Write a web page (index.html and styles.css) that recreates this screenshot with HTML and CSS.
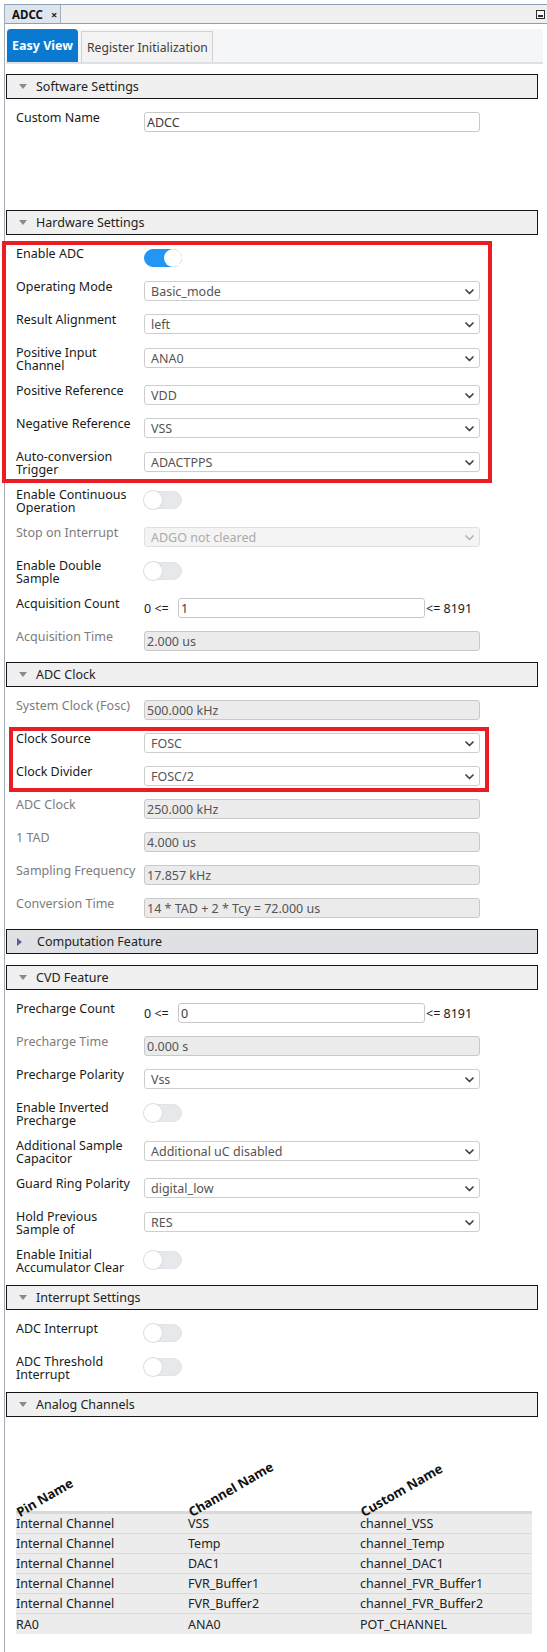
FILE: index.html
```html
<!DOCTYPE html>
<html>
<head>
<meta charset="utf-8">
<title>ADCC</title>
<link rel="stylesheet" href="styles.css">
</head>
<body>
<div class="frame">
  <div class="titlebar">
    <div class="doc-tab"><span class="doc-name">ADCC</span><span class="doc-close">×</span></div>
    <div class="min-btn"><span class="min-bar"></span></div>
  </div>

  <div class="view-tabs">
    <div class="vtab active">Easy View</div>
    <div class="vtab">Register Initialization</div>
  </div>

  <section class="sec first">
    <div class="sec-head"><span class="tri"></span>Software Settings</div>
    <div class="sec-body soft">
      <div class="row"><div class="lbl">Custom Name</div><div class="txt">ADCC</div></div>
    </div>
  </section>

  <section class="sec">
    <div class="sec-head"><span class="tri"></span>Hardware Settings</div>
    <div class="sec-body">
      <div class="group hl1">
        <div class="row"><div class="lbl">Enable ADC</div><div class="tog on"><span class="knob"></span></div></div>
        <div class="row"><div class="lbl">Operating Mode</div><div class="sel"><span>Basic_mode</span><svg class="chev" viewBox="0 0 9 6" width="9" height="6"><path d="M1 1l3.5 3.5L8 1"/></svg></div></div>
        <div class="row"><div class="lbl">Result Alignment</div><div class="sel"><span>left</span><svg class="chev" viewBox="0 0 9 6" width="9" height="6"><path d="M1 1l3.5 3.5L8 1"/></svg></div></div>
        <div class="row two"><div class="lbl">Positive Input<br>Channel</div><div class="sel"><span>ANA0</span><svg class="chev" viewBox="0 0 9 6" width="9" height="6"><path d="M1 1l3.5 3.5L8 1"/></svg></div></div>
        <div class="row"><div class="lbl">Positive Reference</div><div class="sel"><span>VDD</span><svg class="chev" viewBox="0 0 9 6" width="9" height="6"><path d="M1 1l3.5 3.5L8 1"/></svg></div></div>
        <div class="row"><div class="lbl">Negative Reference</div><div class="sel"><span>VSS</span><svg class="chev" viewBox="0 0 9 6" width="9" height="6"><path d="M1 1l3.5 3.5L8 1"/></svg></div></div>
        <div class="row two"><div class="lbl">Auto-conversion<br>Trigger</div><div class="sel"><span>ADACTPPS</span><svg class="chev" viewBox="0 0 9 6" width="9" height="6"><path d="M1 1l3.5 3.5L8 1"/></svg></div></div>
      </div>
      <div class="row two"><div class="lbl">Enable Continuous<br>Operation</div><div class="tog"><span class="knob"></span></div></div>
      <div class="row"><div class="lbl dim">Stop on Interrupt</div><div class="sel dis"><span>ADGO not cleared</span><svg class="chev" viewBox="0 0 9 6" width="9" height="6"><path d="M1 1l3.5 3.5L8 1"/></svg></div></div>
      <div class="row two"><div class="lbl">Enable Double<br>Sample</div><div class="tog"><span class="knob"></span></div></div>
      <div class="row"><div class="lbl">Acquisition Count</div><div class="range"><span class="lo">0 &lt;=</span><div class="txt num">1</div><span class="hi">&lt;= 8191</span></div></div>
      <div class="row"><div class="lbl dim">Acquisition Time</div><div class="ro">2.000 us</div></div>
    </div>
  </section>

  <section class="sec">
    <div class="sec-head"><span class="tri"></span>ADC Clock</div>
    <div class="sec-body">
      <div class="row"><div class="lbl dim">System Clock (Fosc)</div><div class="ro">500.000 kHz</div></div>
      <div class="group hl2">
        <div class="row"><div class="lbl">Clock Source</div><div class="sel"><span>FOSC</span><svg class="chev" viewBox="0 0 9 6" width="9" height="6"><path d="M1 1l3.5 3.5L8 1"/></svg></div></div>
        <div class="row"><div class="lbl">Clock Divider</div><div class="sel"><span>FOSC/2</span><svg class="chev" viewBox="0 0 9 6" width="9" height="6"><path d="M1 1l3.5 3.5L8 1"/></svg></div></div>
      </div>
      <div class="row"><div class="lbl dim">ADC Clock</div><div class="ro">250.000 kHz</div></div>
      <div class="row"><div class="lbl dim">1 TAD</div><div class="ro">4.000 us</div></div>
      <div class="row"><div class="lbl dim">Sampling Frequency</div><div class="ro">17.857 kHz</div></div>
      <div class="row"><div class="lbl dim">Conversion Time</div><div class="ro">14 * TAD + 2 * Tcy = 72.000 us</div></div>
    </div>
  </section>

  <section class="sec collapsed">
    <div class="sec-head alt"><span class="tri right"></span>Computation Feature</div>
  </section>

  <section class="sec">
    <div class="sec-head"><span class="tri"></span>CVD Feature</div>
    <div class="sec-body">
      <div class="row"><div class="lbl">Precharge Count</div><div class="range"><span class="lo">0 &lt;=</span><div class="txt num">0</div><span class="hi">&lt;= 8191</span></div></div>
      <div class="row"><div class="lbl dim">Precharge Time</div><div class="ro">0.000 s</div></div>
      <div class="row"><div class="lbl">Precharge Polarity</div><div class="sel"><span>Vss</span><svg class="chev" viewBox="0 0 9 6" width="9" height="6"><path d="M1 1l3.5 3.5L8 1"/></svg></div></div>
      <div class="row two"><div class="lbl">Enable Inverted<br>Precharge</div><div class="tog"><span class="knob"></span></div></div>
      <div class="row two"><div class="lbl">Additional Sample<br>Capacitor</div><div class="sel"><span>Additional uC disabled</span><svg class="chev" viewBox="0 0 9 6" width="9" height="6"><path d="M1 1l3.5 3.5L8 1"/></svg></div></div>
      <div class="row"><div class="lbl">Guard Ring Polarity</div><div class="sel"><span>digital_low</span><svg class="chev" viewBox="0 0 9 6" width="9" height="6"><path d="M1 1l3.5 3.5L8 1"/></svg></div></div>
      <div class="row two"><div class="lbl">Hold Previous<br>Sample of</div><div class="sel"><span>RES</span><svg class="chev" viewBox="0 0 9 6" width="9" height="6"><path d="M1 1l3.5 3.5L8 1"/></svg></div></div>
      <div class="row two"><div class="lbl">Enable Initial<br>Accumulator Clear</div><div class="tog"><span class="knob"></span></div></div>
    </div>
  </section>

  <section class="sec">
    <div class="sec-head"><span class="tri"></span>Interrupt Settings</div>
    <div class="sec-body">
      <div class="row"><div class="lbl">ADC Interrupt</div><div class="tog"><span class="knob"></span></div></div>
      <div class="row two"><div class="lbl">ADC Threshold<br>Interrupt</div><div class="tog"><span class="knob"></span></div></div>
    </div>
  </section>

  <section class="sec">
    <div class="sec-head"><span class="tri"></span>Analog Channels</div>
    <div class="sec-body chan">
      <div class="tbl">
        <div class="thead">
          <div class="th"><span>Pin Name</span></div>
          <div class="th"><span>Channel Name</span></div>
          <div class="th"><span>Custom Name</span></div>
        </div>
        <div class="tr"><div class="td">Internal Channel</div><div class="td">VSS</div><div class="td">channel_VSS</div></div>
        <div class="tr"><div class="td">Internal Channel</div><div class="td">Temp</div><div class="td">channel_Temp</div></div>
        <div class="tr"><div class="td">Internal Channel</div><div class="td">DAC1</div><div class="td">channel_DAC1</div></div>
        <div class="tr"><div class="td">Internal Channel</div><div class="td">FVR_Buffer1</div><div class="td">channel_FVR_Buffer1</div></div>
        <div class="tr"><div class="td">Internal Channel</div><div class="td">FVR_Buffer2</div><div class="td">channel_FVR_Buffer2</div></div>
        <div class="tr"><div class="td">RA0</div><div class="td">ANA0</div><div class="td">POT_CHANNEL</div></div>
      </div>
    </div>
  </section>
</div>
</body>
</html>
```

FILE: styles.css
```css
* { box-sizing: border-box; }

body {
  margin: 0;
  background: #ffffff;
  font-family: "Noto Sans", "Open Sans", sans-serif;
  font-size: 12.5px;
  color: #1e1e1e;
}

.frame {
  margin: 4px 0 0 4px;
  border-left: 1px solid #a4acb6;
  min-height: 1648px;
}

/* document title bar */
.titlebar {
  height: 20px;
  display: flex;
  justify-content: space-between;
  align-items: stretch;
  background: #f0f0f0;
  border-top: 1px solid #8e9fb2;
  border-bottom: 1px solid #8e9fb2;
}
.doc-tab {
  width: 56px;
  display: flex;
  align-items: center;
  padding-left: 7px;
  background: #dde5ef;
  border-right: 1px solid #9fb0c3;
}
.doc-name {
  font-weight: 700;
  font-size: 11.5px;
  color: #111;
}
.doc-close {
  margin-left: 8px;
  font-weight: 700;
  font-size: 11px;
  color: #222;
}
.min-btn {
  align-self: center;
  width: 9px;
  height: 9px;
  margin-right: 2px;
  border: 1px solid #2d2d2d;
  background: #f7f7f7;
  display: flex;
  align-items: flex-end;
  justify-content: center;
  padding-bottom: 1px;
}
.min-bar {
  width: 5px;
  height: 2px;
  background: #2d2d2d;
}

/* view tabs */
.view-tabs {
  margin: 5px 4px 0 1px;
  height: 35px;
  padding-left: 1px;
  display: flex;
  align-items: flex-end;
  background: #f5f6f8;
  border-bottom: 2px solid #dfe1e4;
}
.vtab {
  height: 31px;
  display: flex;
  align-items: center;
  padding: 0 4px 0 5px;
  margin-right: 3px;
  white-space: nowrap;
  background: #f3f3f3;
  border: 1px solid #d2d2d2;
  border-bottom: none;
  color: #3c3c3c;
  font-size: 12.2px;
}
.vtab.active {
  height: 33px;
  width: 71px;
  background: #0b79d0;
  border: none;
  border-radius: 4px 4px 0 0;
  color: #ffffff;
  font-weight: 700;
  font-size: 12.5px;
}

/* sections */
.sec.first { margin-top: 10px; }
.sec.collapsed { margin-bottom: 11px; }
.sec-head {
  height: 25px;
  margin: 0 9px 0 1px;
  display: flex;
  align-items: center;
  padding-left: 12px;
  background: #f0f0f0;
  border: 1px solid #151515;
  color: #222;
}
.sec-head.alt {
  background: #dfe1e5;
  padding-left: 10px;
}
.tri {
  width: 0;
  height: 0;
  border-left: 4px solid transparent;
  border-right: 4px solid transparent;
  border-top: 5px solid #8a8a8a;
  margin-right: 9px;
}
.tri.right {
  border-top: 4px solid transparent;
  border-bottom: 4px solid transparent;
  border-left: 5px solid #5b5e9c;
  border-right: none;
  margin-right: 15px;
}
.sec-body {
  display: flex;
  flex-direction: column;
  gap: 13px;
  padding: 13px 0 11px 11px;
}
.sec-body.soft { padding-bottom: 78px; }

.group {
  display: flex;
  flex-direction: column;
  gap: 13px;
  position: relative;
}
.group::after {
  content: "";
  position: absolute;
  border: 4px solid #ec1c24;
  pointer-events: none;
}
.hl1::after { top: -7px; bottom: -7px; left: -14px; right: 55px; }
.hl2::after { top: -6px; bottom: -6px; left: -7px; right: 58px; }

/* rows */
.row {
  display: flex;
  align-items: flex-start;
  min-height: 20px;
}
.lbl {
  width: 128px;
  flex: none;
  white-space: nowrap;
  line-height: 12.5px;
  color: #1a1a1a;
}
.lbl.dim { color: #7c7c7c; }
.row.two .sel,
.row.two .txt { margin-top: 1px; }
.row.two .tog { margin-top: 2px; }

.sel, .ro, .txt {
  width: 336px;
  height: 20px;
  border-radius: 3px;
  display: flex;
  align-items: center;
  white-space: nowrap;
}
.sel {
  justify-content: space-between;
  padding: 1px 5px 0 6px;
  background: #ffffff;
  border: 1px solid #cdcdcd;
  color: #555555;
}
.chev {
  fill: none;
  stroke: #444;
  stroke-width: 1.7;
  stroke-linecap: round;
  stroke-linejoin: round;
}
.sel.dis {
  background: #f4f4f4;
  border-color: #e0e0e0;
  color: #ababab;
}
.sel.dis .chev { stroke: #b5b5b5; }
.ro {
  padding: 1px 0 0 2px;
  background: #ebebeb;
  border: 1px solid #c9c9c9;
  color: #555555;
}
.txt {
  padding: 1px 0 0 2px;
  background: #ffffff;
  border: 1px solid #c9c9c9;
  color: #3a3a3a;
}
.range {
  display: flex;
  align-items: center;
  color: #1a1a1a;
}
.range .lo { width: 34px; }
.range .txt.num { width: 247px; }
.range .hi { margin-left: 1px; }

/* toggles */
.tog {
  width: 38px;
  height: 18px;
  margin-top: 1px;
  border-radius: 9px;
  background: #e6e8eb;
  position: relative;
  border: 1px solid #e1e3e6;
}
.tog .knob {
  position: absolute;
  top: -1px;
  left: -1px;
  width: 18px;
  height: 18px;
  border-radius: 50%;
  background: #ffffff;
  box-shadow: 0 0 0 1px #dcdde0;
}
.tog.on {
  background: #2196f3;
  border-color: #2196f3;
}
.tog.on .knob {
  left: auto;
  right: -1px;
  box-shadow: none;
}

/* channel table */
.sec-body.chan {
  padding: 44px 0 0 11px;
}
.tbl {
  width: 516px;
}
.thead {
  display: grid;
  grid-template-columns: 1fr 1fr 1fr;
  height: 53px;
  border-bottom: 3px solid #d9d9d9;
}
.th {
  display: flex;
  align-items: flex-end;
}
.th span {
  display: inline-block;
  font-weight: 700;
  font-size: 13px;
  color: #111;
  line-height: 14px;
  white-space: nowrap;
  transform-origin: 0 100%;
  transform: translate(5px, 8px) rotate(-30deg);
}
.tr {
  display: grid;
  grid-template-columns: 1fr 1fr 1fr;
  height: 20px;
  align-items: center;
  background: #ececec;
  border-bottom: 1px solid #dadada;
}
.tr:last-child { border-bottom: none; }
.td {
  white-space: nowrap;
  color: #222;
}
```
